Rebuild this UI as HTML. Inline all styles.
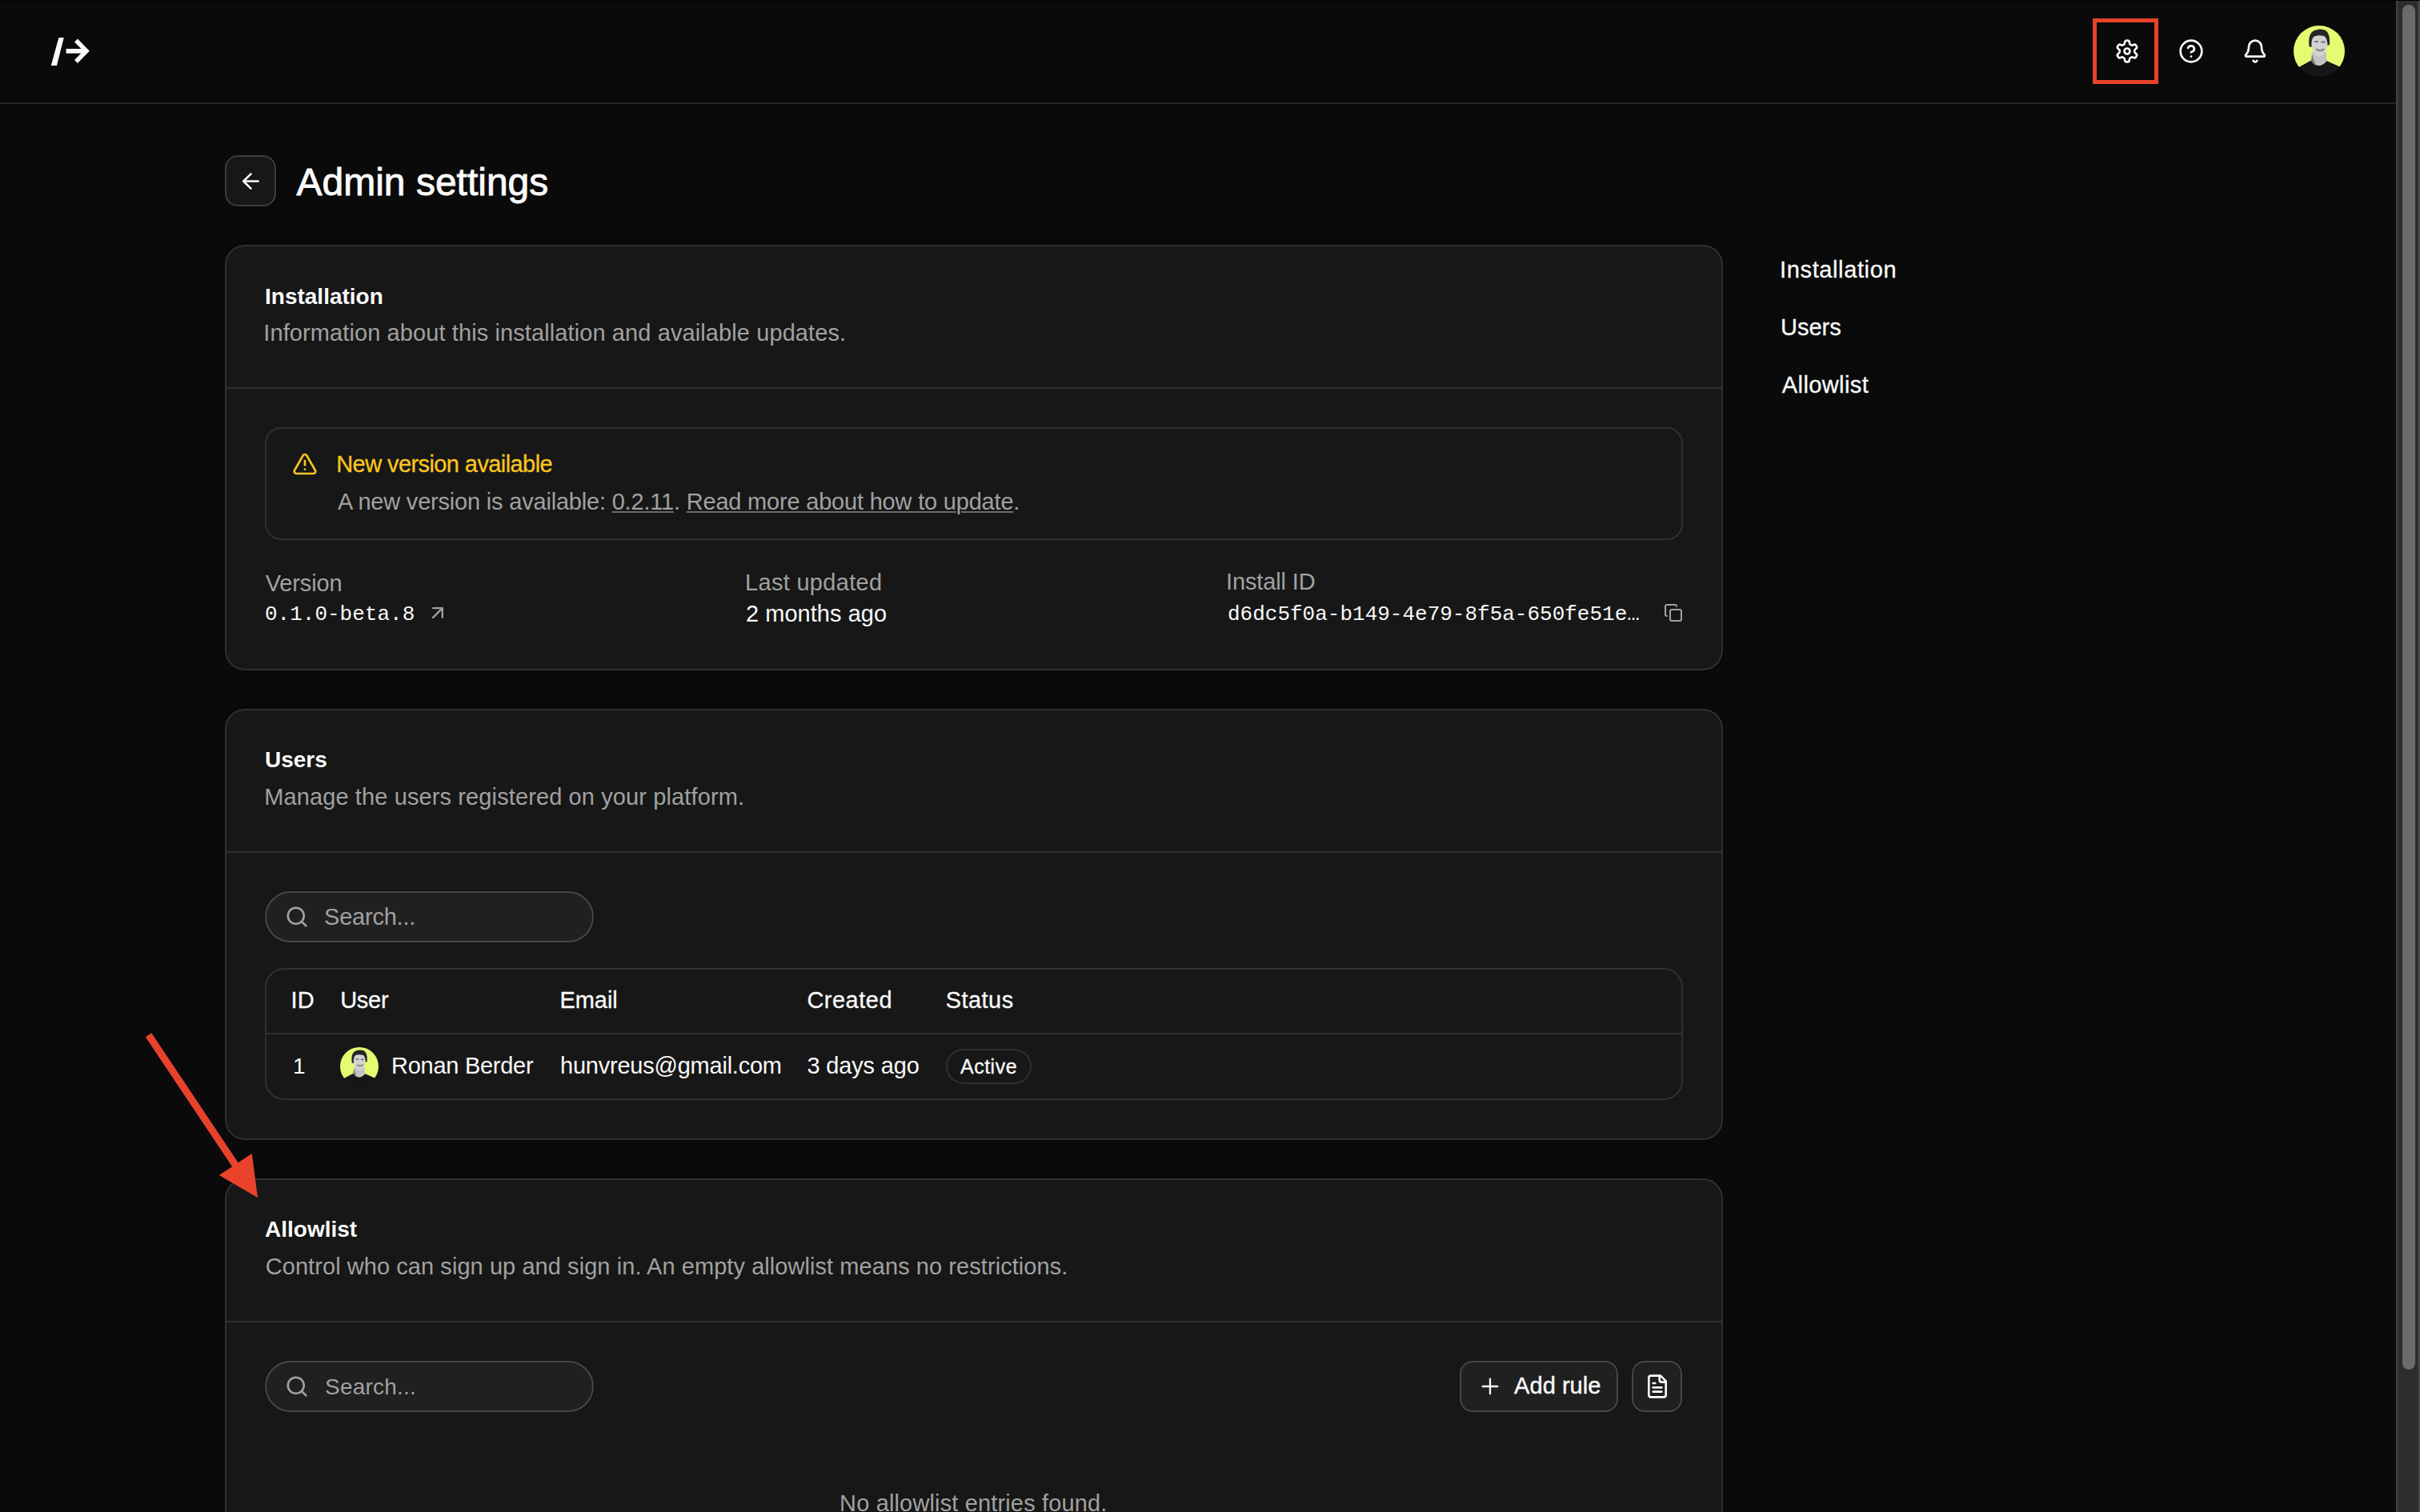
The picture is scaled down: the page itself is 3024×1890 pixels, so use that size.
<!DOCTYPE html>
<html>
<head>
<meta charset="utf-8">
<style>
html,body{margin:0;padding:0;}
body{width:3024px;height:1890px;overflow:hidden;background:#0a0a0a;position:relative;font-family:"Liberation Sans",sans-serif;color:#fafafa;}
.a{position:absolute;}
.t{position:absolute;white-space:nowrap;line-height:1;}
.b{font-weight:bold;}
.mono{font-family:"Liberation Mono",monospace;}
.card{position:absolute;left:281px;width:1868px;background:#171717;border:2px solid #303030;border-radius:25px;box-shadow:0 0 0 1px #070707;}
.search{position:absolute;left:331px;width:407px;height:60px;border:2px solid #474747;border-radius:40px;background:#202020;box-shadow:0 0 0 1px #131313;}
.btn{position:absolute;background:#202020;border:2px solid #474747;border-radius:16px;box-shadow:0 0 0 1px #131313;}
svg{position:absolute;overflow:visible;}
u{text-decoration-thickness:2px;text-underline-offset:2px;text-decoration-color:#6b6b6b;}
</style>
</head>
<body>
<div class="a" style="left:0;top:0;width:3024px;height:1px;background:#030303"></div>
<div class="a" style="left:0;top:128px;width:2994px;height:2px;background:#232323"></div>
<svg style="left:0;top:0" width="130" height="128">
  <polygon points="73.4,47 79.8,47 71,82 63.8,82" fill="#fafafa"/>
  <rect x="82.6" y="61" width="24" height="5.7" fill="#fafafa"/>
  <polyline points="95,50.5 108,63.8 95,77" fill="none" stroke="#fafafa" stroke-width="5.5" stroke-linejoin="miter" stroke-miterlimit="4"/>
</svg>
<div class="a" style="left:2615px;top:23px;width:72px;height:72px;border:5px solid #e8432a"></div>
<svg style="left:2642px;top:48px" width="32" height="32" viewBox="0 0 24 24" fill="none" stroke="#fafafa" stroke-width="2" stroke-linecap="round" stroke-linejoin="round"><path d="M12.22 2h-.44a2 2 0 0 0-2 2v.18a2 2 0 0 1-1 1.73l-.43.25a2 2 0 0 1-2 0l-.15-.08a2 2 0 0 0-2.73.73l-.22.38a2 2 0 0 0 .73 2.73l.15.1a2 2 0 0 1 1 1.72v.51a2 2 0 0 1-1 1.74l-.15.09a2 2 0 0 0-.73 2.73l.22.38a2 2 0 0 0 2.73.73l.15-.08a2 2 0 0 1 2 0l.43.25a2 2 0 0 1 1 1.73V20a2 2 0 0 0 2 2h.44a2 2 0 0 0 2-2v-.18a2 2 0 0 1 1-1.73l.43-.25a2 2 0 0 1 2 0l.15.08a2 2 0 0 0 2.73-.73l.22-.39a2 2 0 0 0-.73-2.73l-.15-.08a2 2 0 0 1-1-1.74v-.5a2 2 0 0 1 1-1.74l.15-.09a2 2 0 0 0 .73-2.73l-.22-.38a2 2 0 0 0-2.73-.73l-.15.08a2 2 0 0 1-2 0l-.43-.25a2 2 0 0 1-1-1.73V4a2 2 0 0 0-2-2z"/><circle cx="12" cy="12" r="2.6"/></svg>
<svg style="left:2722px;top:48px" width="32" height="32" viewBox="0 0 24 24" fill="none" stroke="#fafafa" stroke-width="2" stroke-linecap="round" stroke-linejoin="round"><circle cx="12" cy="12" r="10"/><path d="M9.09 9a3 3 0 0 1 5.83 1c0 2-3 3-3 3"/><path d="M12 17h.01"/></svg>
<svg style="left:2802px;top:48px" width="32" height="32" viewBox="0 0 24 24" fill="none" stroke="#fafafa" stroke-width="2" stroke-linecap="round" stroke-linejoin="round"><path d="M10.268 21a2 2 0 0 0 3.464 0"/><path d="M3.262 15.326A1 1 0 0 0 4 17h16a1 1 0 0 0 .74-1.673C19.41 13.956 18 12.499 18 8A6 6 0 0 0 6 8c0 4.499-1.411 5.956-2.738 7.326"/></svg>
<svg style="left:2866px;top:32px" width="64" height="64" viewBox="0 0 64 64"><defs><clipPath id="av1"><circle cx="32" cy="32" r="32"/></clipPath></defs><circle cx="32" cy="32" r="32" fill="#161616"/><g clip-path="url(#av1)">
<path d="M-1 -1 H65 V56 L57.4 51.2 L41.2 44 Q31.7 56 22 43.6 L7 51.7 L-1 58Z" fill="#e6fb72"/>
<path d="M23 33 Q22.5 42 22 44 Q31 55 41.5 44.5 Q40.5 40 41 33Z" fill="#c4c4c4"/>
<path d="M23 36 Q25 42 28 50 Q24 48 22 44Z" fill="#7a7a7a"/>
<path d="M22.5 18 Q22 36 32 39 Q41.5 37 42.5 18 Q40 8 32 8.5 Q24 9 22.5 18Z" fill="#d2d2d2"/>
<path d="M19.5 26 Q17.5 10 26 6 Q34 3 40 6 Q46 10 45 24 L42.5 25 Q42 15 38 13 Q30 11 25 14 Q22 17 22.5 27Z" fill="#262626"/>
<path d="M26 20 h5 M34.5 20.5 h5" stroke="#555" stroke-width="1.4"/>
<path d="M28 29.5 Q33 34.5 38.5 29.5 Q33 31.5 28 29.5Z" fill="#f2f2f2" stroke="#3a3a3a" stroke-width="0.7"/>
</g></svg>
<div class="a" style="left:2994px;top:1px;width:30px;height:1889px;background:#2d2d2d"></div>
<div class="a" style="left:2994px;top:1px;width:2px;height:1889px;background:#444"></div>
<div class="a" style="left:3022px;top:1px;width:2px;height:1889px;background:#4a4a4a"></div>
<div class="a" style="left:3002px;top:6px;width:16px;height:1706px;background:#6b6b6b;border-radius:8px"></div>
<div class="a" style="left:281px;top:194px;width:60px;height:60px;border:2px solid #3d3d3d;border-radius:16px;background:#171717;box-shadow:0 0 0 1px #060606"></div>
<svg style="left:302.5px;top:215.5px" width="21" height="21" viewBox="4 4 16 16" fill="none" stroke="#fafafa" stroke-width="1.9" stroke-linecap="round" stroke-linejoin="round"><path d="m12 19-7-7 7-7"/><path d="M19 12H5"/></svg>
<div class="t" style="left:370.5px;top:203.66px;font-size:48px;color:#fafafa;letter-spacing:0px;-webkit-text-stroke:0.9px #fafafa">Admin settings</div>
<div class="t" style="left:2224.1100000000006px;top:323.45px;font-size:29px;color:#fafafa;letter-spacing:0.615px;-webkit-text-stroke:0.3px #fafafa">Installation</div>
<div class="t" style="left:2225.0100000000007px;top:395.45px;font-size:29px;color:#fafafa;letter-spacing:0.01px;-webkit-text-stroke:0.3px #fafafa">Users</div>
<div class="t" style="left:2226.8100000000004px;top:467.45px;font-size:29px;color:#fafafa;letter-spacing:0.401px;-webkit-text-stroke:0.3px #fafafa">Allowlist</div>
<div class="card" style="top:306px;height:528px"></div>
<div class="card" style="top:886px;height:535px"></div>
<div class="card" style="top:1473px;height:600px"></div>
<div class="t" style="left:331px;top:356.89px;font-size:28px;color:#fafafa;letter-spacing:0px;font-weight:bold">Installation</div>
<div class="t" style="left:329.28999999999996px;top:401.95px;font-size:29px;color:#a1a1a1;letter-spacing:0.098px;">Information about this installation and available updates.</div>
<div class="a" style="left:283px;top:484px;width:1868px;height:2px;background:#303030"></div>
<div class="a" style="left:331px;top:534px;width:1768px;height:137px;border:2px solid #303030;border-radius:20px"></div>
<svg style="left:365px;top:564px" width="32" height="32" viewBox="0 0 24 24" fill="none" stroke="#fcc51f" stroke-width="2" stroke-linecap="round" stroke-linejoin="round"><path d="m21.73 18-8-14a2 2 0 0 0-3.48 0l-8 14A2 2 0 0 0 4 21h16a2 2 0 0 0 1.73-3"/><path d="M12 9v4"/><path d="M12 17h.01"/></svg>
<div class="t" style="left:420.2799999999999px;top:565.87px;font-size:29px;color:#fcc51f;letter-spacing:-0.586px;-webkit-text-stroke:0.3px #fcc51f">New version available</div>
<div class="t" style="left:422.0px;top:613.25px;font-size:29px;color:#a1a1a1;letter-spacing:-0.197px;">A new version is available: <u>0.2.11</u>. <u>Read more about how to update</u>.</div>
<div class="t" style="left:331.7200000000001px;top:714.56px;font-size:29px;color:#a1a1a1;letter-spacing:-0.14px;">Version</div>
<div class="t mono" style="left:331px;top:754.58px;font-size:26px">0.1.0-beta.8</div>
<svg style="left:533px;top:751.5px" width="28" height="28" viewBox="0 0 24 24" fill="none" stroke="#a1a1a1" stroke-width="2" stroke-linecap="round" stroke-linejoin="round"><path d="M7 7h10v10"/><path d="M7 17 17 7"/></svg>
<div class="t" style="left:931.1099999999999px;top:713.75px;font-size:29px;color:#a1a1a1;letter-spacing:0.294px;">Last updated</div>
<div class="t" style="left:932.01px;top:753.45px;font-size:29px;color:#fafafa;letter-spacing:0.035px;">2 months ago</div>
<div class="t" style="left:1532.0199999999998px;top:713.24px;font-size:29px;color:#a1a1a1;letter-spacing:-0.13px;">Install ID</div>
<div class="t mono" style="left:1534px;top:755.08px;font-size:26px">d6dc5f0a-b149-4e79-8f5a-650fe51e…</div>
<svg style="left:2079px;top:754px" width="24" height="24" viewBox="0 0 24 24" fill="none" stroke="#a1a1a1" stroke-width="2" stroke-linecap="round" stroke-linejoin="round"><rect width="14" height="14" x="8" y="8" rx="2" ry="2"/><path d="M4 16c-1.1 0-2-.9-2-2V4c0-1.1.9-2 2-2h10c1.1 0 2 .9 2 2"/></svg>
<div class="t" style="left:331px;top:936.29px;font-size:28px;color:#fafafa;letter-spacing:0px;font-weight:bold">Users</div>
<div class="t" style="left:330.18999999999994px;top:981.75px;font-size:29px;color:#a1a1a1;letter-spacing:0.114px;">Manage the users registered on your platform.</div>
<div class="a" style="left:283px;top:1064px;width:1868px;height:2px;background:#303030"></div>
<div class="search" style="top:1114px"></div>
<svg style="left:355.5px;top:1130.5px" width="30" height="30" viewBox="0 0 24 24" fill="none" stroke="#a1a1a1" stroke-width="2.1" stroke-linecap="round" stroke-linejoin="round"><circle cx="11" cy="11" r="8"/><path d="m21 21-4.3-4.3"/></svg>
<div class="t" style="left:405.01px;top:1132.45px;font-size:29px;color:#a1a1a1;letter-spacing:-0.216px;">Search...</div>
<div class="a" style="left:331px;top:1210px;width:1768px;height:161px;border:2px solid #303030;border-radius:24px"></div>
<div class="a" style="left:333px;top:1291px;width:1768px;height:2px;background:#303030"></div>
<div class="t" style="left:363.55px;top:1236.45px;font-size:29px;color:#fafafa;letter-spacing:0.06px;-webkit-text-stroke:0.3px #fafafa">ID</div>
<div class="t" style="left:425.14px;top:1236.45px;font-size:29px;color:#fafafa;letter-spacing:-0.23px;-webkit-text-stroke:0.3px #fafafa">User</div>
<div class="t" style="left:699.5px;top:1236.45px;font-size:29px;color:#fafafa;letter-spacing:-0.08px;-webkit-text-stroke:0.3px #fafafa">Email</div>
<div class="t" style="left:1008.41px;top:1236.45px;font-size:29px;color:#fafafa;letter-spacing:0.495px;-webkit-text-stroke:0.3px #fafafa">Created</div>
<div class="t" style="left:1181.6800000000003px;top:1236.45px;font-size:29px;color:#fafafa;letter-spacing:0.456px;-webkit-text-stroke:0.3px #fafafa">Status</div>
<div class="t" style="left:366px;top:1319.29px;font-size:28px;color:#fafafa;letter-spacing:0px;">1</div>
<svg style="left:425px;top:1309px" width="48" height="48" viewBox="0 0 64 64"><defs><clipPath id="av2"><circle cx="32" cy="32" r="32"/></clipPath></defs><circle cx="32" cy="32" r="32" fill="#161616"/><g clip-path="url(#av2)">
<path d="M-1 -1 H65 V56 L57.4 51.2 L41.2 44 Q31.7 56 22 43.6 L7 51.7 L-1 58Z" fill="#e6fb72"/>
<path d="M23 33 Q22.5 42 22 44 Q31 55 41.5 44.5 Q40.5 40 41 33Z" fill="#c4c4c4"/>
<path d="M23 36 Q25 42 28 50 Q24 48 22 44Z" fill="#7a7a7a"/>
<path d="M22.5 18 Q22 36 32 39 Q41.5 37 42.5 18 Q40 8 32 8.5 Q24 9 22.5 18Z" fill="#d2d2d2"/>
<path d="M19.5 26 Q17.5 10 26 6 Q34 3 40 6 Q46 10 45 24 L42.5 25 Q42 15 38 13 Q30 11 25 14 Q22 17 22.5 27Z" fill="#262626"/>
<path d="M26 20 h5 M34.5 20.5 h5" stroke="#555" stroke-width="1.4"/>
<path d="M28 29.5 Q33 34.5 38.5 29.5 Q33 31.5 28 29.5Z" fill="#f2f2f2" stroke="#3a3a3a" stroke-width="0.7"/>
</g></svg>
<div class="t" style="left:489.04px;top:1318.27px;font-size:29px;color:#fafafa;letter-spacing:-0.272px;">Ronan Berder</div>
<div class="t" style="left:700.0px;top:1318.45px;font-size:29px;color:#fafafa;letter-spacing:-0.228px;">hunvreus@gmail.com</div>
<div class="t" style="left:1008.41px;top:1318.45px;font-size:29px;color:#fafafa;letter-spacing:-0.16px;">3 days ago</div>
<div class="a" style="left:1182px;top:1311px;width:103px;height:40px;border:2px solid #303030;border-radius:24px"></div>
<div class="t" style="left:1200px;top:1321.03px;font-size:25px;color:#fafafa;letter-spacing:0.5px;-webkit-text-stroke:0.3px #fafafa">Active</div>
<div class="t" style="left:331px;top:1522.79px;font-size:28px;color:#fafafa;letter-spacing:0px;font-weight:bold">Allowlist</div>
<div class="t" style="left:331.7200000000001px;top:1568.65px;font-size:29px;color:#a1a1a1;letter-spacing:0.063px;">Control who can sign up and sign in. An empty allowlist means no restrictions.</div>
<div class="a" style="left:283px;top:1651px;width:1868px;height:2px;background:#303030"></div>
<div class="search" style="top:1701px"></div>
<svg style="left:355.5px;top:1717.5px" width="30" height="30" viewBox="0 0 24 24" fill="none" stroke="#a1a1a1" stroke-width="2.1" stroke-linecap="round" stroke-linejoin="round"><circle cx="11" cy="11" r="8"/><path d="m21 21-4.3-4.3"/></svg>
<div class="t" style="left:406px;top:1720.29px;font-size:28px;color:#a1a1a1;letter-spacing:0.2px;">Search...</div>
<div class="btn" style="left:1824px;top:1701px;width:194px;height:60px"></div>
<svg style="left:1846px;top:1717px" width="32" height="32" viewBox="0 0 24 24" fill="none" stroke="#fafafa" stroke-width="1.7" stroke-linecap="round" stroke-linejoin="round"><path d="M5 12h14"/><path d="M12 5v14"/></svg>
<div class="t" style="left:1892.0900000000001px;top:1718.29px;font-size:29px;color:#fafafa;letter-spacing:0.043px;-webkit-text-stroke:0.4px #fafafa">Add rule</div>
<div class="btn" style="left:2039px;top:1701px;width:59px;height:60px"></div>
<svg style="left:2055px;top:1717px" width="32" height="32" viewBox="0 0 24 24" fill="none" stroke="#fafafa" stroke-width="2" stroke-linecap="round" stroke-linejoin="round"><path d="M15 2H6a2 2 0 0 0-2 2v16a2 2 0 0 0 2 2h12a2 2 0 0 0 2-2V7Z"/><path d="M14 2v4a2 2 0 0 0 2 2h4"/><path d="M10 9H8"/><path d="M16 13H8"/><path d="M16 17H8"/></svg>
<div class="t" style="left:1049.0900000000001px;top:1865.45px;font-size:29px;color:#a1a1a1;letter-spacing:0.147px;">No allowlist entries found.</div>
<svg style="left:0;top:0" width="400" height="1600"><line x1="185.6" y1="1293.8" x2="300" y2="1465" stroke="#e8432a" stroke-width="9"/><polygon points="322,1497 273.8,1469 314.8,1442" fill="#e8432a"/></svg>
</body>
</html>
